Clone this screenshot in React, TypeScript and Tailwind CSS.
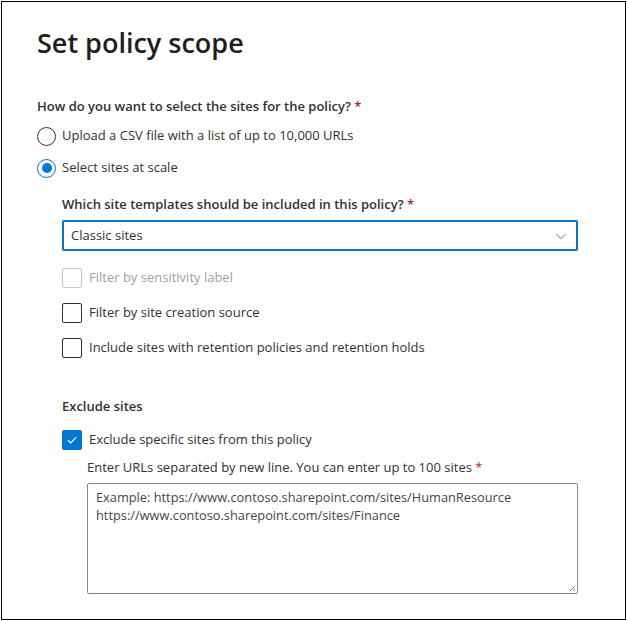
import React from "react";

const font = { fontFamily: '"Segoe UI", "Open Sans", sans-serif' };

function Radio({ checked, label }: { checked?: boolean; label: string }) {
  return (
    <div className="flex items-center h-[20px]">
      <div
        className={`w-[19px] h-[19px] rounded-full border flex items-center justify-center ${
          checked ? "border-[#0078d4]" : "border-[#323130]"
        }`}
      >
        {checked && <div className="w-[10px] h-[10px] rounded-full bg-[#0078d4]" />}
      </div>
      <span className="ml-[6px] text-[13px] text-[#323130]">{label}</span>
    </div>
  );
}

function Check({ checked, disabled, label }: { checked?: boolean; disabled?: boolean; label: string }) {
  return (
    <div className="flex items-center h-[20px]">
      <div
        className={`w-[20px] h-[20px] rounded-[2px] border flex items-center justify-center ${
          checked
            ? "bg-[#0078d4] border-[#0078d4]"
            : disabled
            ? "border-[#c8c6c4]"
            : "border-[#323130]"
        }`}
      >
        {checked && (
          <svg width="12" height="12" viewBox="0 0 12 12" fill="none">
            <path d="M2 6.3 L4.8 9 L10.2 3.2" stroke="white" strokeWidth="1.2" />
          </svg>
        )}
      </div>
      <span className={`ml-[7px] text-[13px] ${disabled ? "text-[#a19f9d]" : "text-[#323130]"}`}>{label}</span>
    </div>
  );
}

export default function App() {
  return (
    <div className="w-[628px] h-[621px] bg-white p-[1px]" style={font}>
      <div className="w-[625px] h-[619px] border border-[#000] pl-[35px] pt-[24px]">
        <h1 className="text-[27px] font-semibold text-[#201f1e] leading-[34px]">Set policy scope</h1>
        <div className="mt-[36px] text-[13px] font-semibold text-[#323130] leading-[20px]">
          How do you want to select the sites for the policy? <span className="text-[#a4262c]">*</span>
        </div>
        <div className="mt-[10px] flex flex-col gap-[12px]">
          <Radio label="Upload a CSV file with a list of up to 10,000 URLs" />
          <Radio checked label="Select sites at scale" />
        </div>
        <div className="pl-[25px]">
          <div className="mt-[16px] text-[13px] font-semibold text-[#323130] leading-[20px]">
            Which site templates should be included in this policy? <span className="text-[#a4262c]">*</span>
          </div>
          <div className="mt-[6px] w-[516px] h-[31px] border-2 border-[#0078d4] rounded-[2px] flex items-center justify-between pl-[7px] pr-[8px]">
            <span className="text-[13px] text-[#323130]">Classic sites</span>
            <svg width="14" height="14" viewBox="0 0 16 16" fill="none">
              <path d="M2.5 5.5 L8 11 L13.5 5.5" stroke="#605e5c" strokeWidth="1" />
            </svg>
          </div>
          <div className="mt-[17px] flex flex-col gap-[15px]">
            <Check disabled label="Filter by sensitivity label" />
            <Check label="Filter by site creation source" />
            <Check label="Include sites with retention policies and retention holds" />
          </div>
          <div className="mt-[38px] text-[13px] font-semibold text-[#323130] leading-[20px]">Exclude sites</div>
          <div className="mt-[14px]">
            <Check checked label="Exclude specific sites from this policy" />
          </div>
          <div className="pl-[25px]">
            <div className="mt-[7px] text-[13px] text-[#323130] leading-[20px]">
              Enter URLs separated by new line. You can enter up to 100 sites <span className="text-[#a4262c]">*</span>
            </div>
            <div className="relative mt-[6px] w-[491px] h-[111px] border border-[#8a8886] rounded-[2px] px-[8px] pt-[4px] text-[12.8px] leading-[18px] text-[#484644]">
              <div>Example: https://www.contoso.sharepoint.com/sites/HumanResource</div>
              <div>https://www.contoso.sharepoint.com/sites/Finance</div>
              <svg className="absolute right-[1px] bottom-[1px]" width="8" height="8" viewBox="0 0 8 8">
                <path d="M7 2 L2 7 M7 5 L5 7" stroke="#8a8886" strokeWidth="1" />
              </svg>
            </div>
          </div>
        </div>
      </div>
    </div>
  );
}
